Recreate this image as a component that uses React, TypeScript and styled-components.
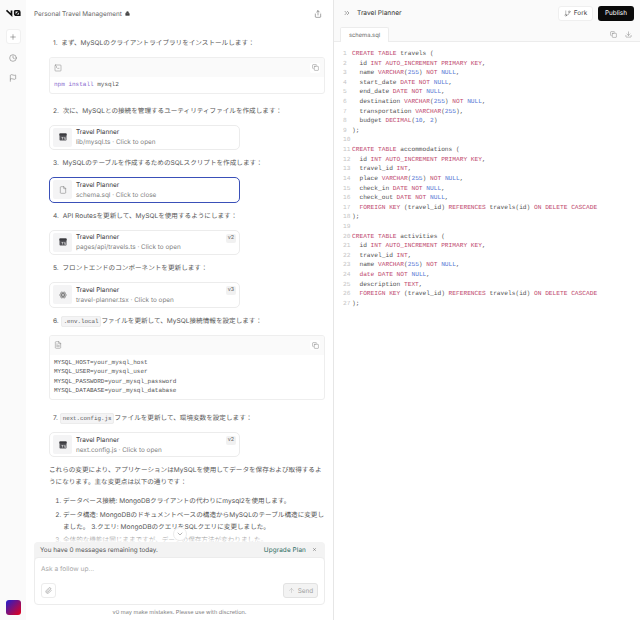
import React from "react";
import styled, { createGlobalStyle } from "styled-components";
import {
  Plus, Clock, Flag, Share, Lock, SquareTerminal, Copy, File, FileText, ChevronDown, X,
  Paperclip, ArrowUp, ChevronsRight, GitBranch, Download,
} from "lucide-react";

const sql = `CREATE TABLE travels (
  id INT AUTO_INCREMENT PRIMARY KEY,
  name VARCHAR(255) NOT NULL,
  start_date DATE NOT NULL,
  end_date DATE NOT NULL,
  destination VARCHAR(255) NOT NULL,
  transportation VARCHAR(255),
  budget DECIMAL(10, 2)
);

CREATE TABLE accommodations (
  id INT AUTO_INCREMENT PRIMARY KEY,
  travel_id INT,
  place VARCHAR(255) NOT NULL,
  check_in DATE NOT NULL,
  check_out DATE NOT NULL,
  FOREIGN KEY (travel_id) REFERENCES travels(id) ON DELETE CASCADE
);

CREATE TABLE activities (
  id INT AUTO_INCREMENT PRIMARY KEY,
  travel_id INT,
  name VARCHAR(255) NOT NULL,
  date DATE NOT NULL,
  description TEXT,
  FOREIGN KEY (travel_id) REFERENCES travels(id) ON DELETE CASCADE
);`.split("\n");

const tokenRe = /\b(CREATE|TABLE|INT|AUTO_INCREMENT|PRIMARY|KEY|VARCHAR|NOT|DATE|date|DECIMAL|FOREIGN|REFERENCES|ON|DELETE|CASCADE|TEXT|NULL|\d+)\b/g;

const highlight = (line: string) =>
  line.split(tokenRe).map((part, i) => {
    if (i % 2 === 0) return part;
    const blue = part === "NULL" || /^\d+$/.test(part);
    return <Token key={i} $blue={blue}>{part}</Token>;
  });

const TsBadge = () => (
  <svg width="8" height="8" viewBox="0 0 16 16">
    <rect x="1" y="1" width="14" height="14" rx="1.5" fill="#55555a" />
    <rect x="1" y="1" width="14" height="4" fill="#3a3a3e" />
    <path d="M5 9h4M7 9v4M13 9h-2v2h2v2h-2" stroke="#fff" strokeWidth="1" fill="none" />
  </svg>
);

const ReactMark = () => (
  <svg width="8" height="8" viewBox="0 0 16 16" fill="none" stroke="#555" strokeWidth="1">
    <ellipse cx="8" cy="8" rx="7" ry="2.8" />
    <ellipse cx="8" cy="8" rx="7" ry="2.8" transform="rotate(60 8 8)" />
    <ellipse cx="8" cy="8" rx="7" ry="2.8" transform="rotate(120 8 8)" />
    <circle cx="8" cy="8" r="1.2" fill="#555" stroke="none" />
  </svg>
);

const Logo = () => (
  <svg width="15" height="8" viewBox="0 0 30 16" fill="none" stroke="#111" strokeWidth="3.4">
    <path d="M1 2.5 L11 12 V3" />
    <path d="M17 3.5 H25 A2.5 2.5 0 0 1 27.5 6 V12.5 H20 A2.5 2.5 0 0 1 17.5 10 V3.5 Z" />
    <path d="M19 12 L27 4" strokeWidth="2.4" />
  </svg>
);

interface CardProps {
  name: string;
  icon: React.ReactNode;
  action?: string;
  version?: string;
  active?: boolean;
}

const Card = ({ name, icon, action = "open", version, active }: CardProps) => (
  <CardBox $active={active}>
    <CardIcon>{icon}</CardIcon>
    <CardText>
      <CardTitle>Travel Planner</CardTitle>
      <CardSub>{name} · Click to {action}</CardSub>
    </CardText>
    {version && <Version>{version}</Version>}
  </CardBox>
);

const App = () => (
  <Page>
    <GlobalStyle />
    <Sidebar>
      <LogoSlot><Logo /></LogoSlot>
      <NewButton><Plus size={8} strokeWidth={1.3} /></NewButton>
      <SideIcon><Clock size={8} strokeWidth={1.2} /></SideIcon>
      <SideIcon><Flag size={8} strokeWidth={1.2} /></SideIcon>
      <Avatar />
    </Sidebar>

    <Chat>
      <ChatHeader>
        <ChatTitle>Personal Travel Management</ChatTitle>
        <Lock size={5} fill="#444" color="#444" />
        <HeaderSpacer />
        <Share size={8} strokeWidth={1.2} color="#222" />
      </ChatHeader>

      <Messages>
        <Step $top={11}>1.&nbsp; まず、MySQLのクライアントライブラリをインストールします：</Step>
        <CodeBlock>
          <CodeHead>
            <SquareTerminal size={8} strokeWidth={1.1} color="#555" />
            <CopyButton><Copy size={7} strokeWidth={1.2} /></CopyButton>
          </CodeHead>
          <CodeBody><Purple>npm install</Purple> mysql2</CodeBody>
        </CodeBlock>

        <Step $top={12}>2.&nbsp; 次に、MySQLとの接続を管理するユーティリティファイルを作成します：</Step>
        <Card name="lib/mysql.ts" icon={<TsBadge />} />

        <Step>3.&nbsp; MySQLのテーブルを作成するためのSQLスクリプトを作成します：</Step>
        <Card name="schema.sql" icon={<File size={8} strokeWidth={1.2} />} action="close" active />

        <Step>4.&nbsp; API Routesを更新して、MySQLを使用するようにします：</Step>
        <Card name="pages/api/travels.ts" icon={<TsBadge />} version="v2" />

        <Step>5.&nbsp; フロントエンドのコンポーネントを更新します：</Step>
        <Card name="travel-planner.tsx" icon={<ReactMark />} version="v3" />

        <Step>6.&nbsp;<InlineCode>.env.local</InlineCode>ファイルを更新して、MySQL接続情報を設定します：</Step>
        <CodeBlock>
          <CodeHead>
            <FileText size={8} strokeWidth={1.1} color="#555" />
            <CopyButton><Copy size={7} strokeWidth={1.2} /></CopyButton>
          </CodeHead>
          <CodeBody>
            MYSQL_HOST=your_mysql_host<br />
            MYSQL_USER=your_mysql_user<br />
            MYSQL_PASSWORD=your_mysql_password<br />
            MYSQL_DATABASE=your_mysql_database
          </CodeBody>
        </CodeBlock>

        <Step $top={13}>7.&nbsp;<InlineCode>next.config.js</InlineCode>ファイルを更新して、環境変数を設定します：</Step>
        <Card name="next.config.js" icon={<TsBadge />} version="v2" />

        <Paragraph>これらの変更により、アプリケーションはMySQLを使用してデータを保存および取得するようになります。主な変更点は以下の通りです：</Paragraph>
        <List>
          <li>データベース接続: MongoDBクライアントの代わりにmysql2を使用します。</li>
          <li>データ構造: MongoDBのドキュメントベースの構造からMySQLのテーブル構造に変更しました。 3.クエリ: MongoDBのクエリをSQLクエリに変更しました。</li>
          <li>全体的な機能は同じままですが、データの保存方法が変わりました。</li>
        </List>
      </Messages>

      <Composer>
        <ScrollDown><ChevronDown size={8} strokeWidth={1.3} /></ScrollDown>
        <Banner>
          <span>You have 0 messages remaining today.</span>
          <Upgrade>Upgrade Plan</Upgrade>
          <X size={5} strokeWidth={1.6} color="#333" />
        </Banner>
        <InputBox>
          <Placeholder>Ask a follow up...</Placeholder>
          <InputRow>
            <AttachButton><Paperclip size={7} strokeWidth={1.2} /></AttachButton>
            <SendButton><ArrowUp size={7} strokeWidth={1.2} />Send</SendButton>
          </InputRow>
        </InputBox>
        <Disclaimer>v0 may make mistakes. Please use with discretion.</Disclaimer>
      </Composer>
    </Chat>

    <Preview>
      <PreviewHeader>
        <ChevronsRight size={8} strokeWidth={1.2} color="#222" />
        <PreviewTitle>Travel Planner</PreviewTitle>
        <HeaderSpacer />
        <ForkButton><GitBranch size={7} strokeWidth={1.2} />Fork</ForkButton>
        <PublishButton>Publish</PublishButton>
      </PreviewHeader>
      <TabBar>
        <Tab>schema.sql</Tab>
        <HeaderSpacer />
        <Copy size={7} strokeWidth={1.1} color="#444" />
        <Download size={7} strokeWidth={1.1} color="#444" />
      </TabBar>
      <Editor>
        {sql.map((line, i) => (
          <CodeLine key={i}>
            <LineNo>{i + 1}</LineNo>
            <span>{highlight(line)}</span>
          </CodeLine>
        ))}
      </Editor>
    </Preview>
  </Page>
);

const GlobalStyle = createGlobalStyle`
  html, body { margin: 0; padding: 0; background: #fff; }
  * { box-sizing: border-box; }
  body { text-rendering: geometricPrecision; }
`;

const sans = `Inter, "Noto Sans CJK JP", sans-serif`;
const mono = `"Liberation Mono", "DejaVu Sans Mono", monospace`;

const Page = styled.div`
  width: 640px;
  height: 620px;
  display: flex;
  overflow: hidden;
  background: #fafafa;
  font-family: ${sans};
  color: #333;
`;

const Sidebar = styled.aside`
  width: 26px;
  flex: none;
  display: flex;
  flex-direction: column;
  align-items: center;
  padding: 9px 0 5px;
  background: #fafafa;
`;

const LogoSlot = styled.div`
  height: 8px;
  margin-bottom: 12px;
  display: flex;
`;

const NewButton = styled.div`
  width: 15px;
  height: 15px;
  display: flex;
  align-items: center;
  justify-content: center;
  background: #fff;
  border: 1px solid #f0f0f0;
  border-radius: 3px;
  color: #444;
  margin-bottom: 6px;
`;

const SideIcon = styled.div`
  width: 15px;
  height: 15px;
  margin-bottom: 5px;
  display: flex;
  align-items: center;
  justify-content: center;
  color: #444;
`;

const Avatar = styled.div`
  width: 15px;
  height: 15px;
  margin-top: auto;
  border-radius: 3px;
  background: linear-gradient(135deg, #1f1fd0, #e80018);
`;

const Chat = styled.main`
  position: relative;
  width: 308px;
  flex: none;
  background: #fff;
  border-right: 1px solid #e6e6e6;
  display: flex;
  flex-direction: column;
  overflow: hidden;
`;

const ChatHeader = styled.header`
  height: 27px;
  flex: none;
  padding: 0 11px 0 8px;
  display: flex;
  align-items: center;
  gap: 3px;
`;

const ChatTitle = styled.div`
  font-size: 6.4px;
  color: #666;
`;

const HeaderSpacer = styled.div`
  flex: 1;
`;

const Messages = styled.div`
  flex: 1;
  overflow: hidden;
  padding: 0 8px 0 23px;
`;

const Step = styled.div<{ $top?: number }>`
  height: 10px;
  font-size: 6.6px;
  line-height: 10px;
  color: #555;
  padding-left: 4px;
  margin: ${(p) => p.$top ?? 8}px 0 9px;
  white-space: nowrap;
`;

const InlineCode = styled.code`
  font-family: ${mono};
  font-size: 5.8px;
  line-height: 1;
  color: #555;
  background: #f4f4f5;
  border: 1px solid #ececec;
  border-radius: 2px;
  padding: 1px 2px;
`;

const CodeBlock = styled.div`
  width: 276px;
  border: 1px solid #eeeeee;
  border-radius: 3px;
  overflow: hidden;
  background: #fff;
`;

const CodeHead = styled.div`
  height: 19px;
  padding: 0 4px;
  background: #fafafa;
  display: flex;
  align-items: center;
  justify-content: space-between;
`;

const CopyButton = styled.div`
  width: 10px;
  height: 10px;
  background: #fff;
  border-radius: 2px;
  display: flex;
  align-items: center;
  justify-content: center;
  color: #555;
`;

const CodeBody = styled.div`
  padding: 3px 4px;
  font-family: ${mono};
  font-size: 6px;
  line-height: 9.6px;
  color: #555;
`;

const Purple = styled.span`
  color: #8a6cd0;
`;

const CardBox = styled.div<{ $active?: boolean }>`
  position: relative;
  width: 191px;
  height: 25.5px;
  padding: 3px;
  display: flex;
  align-items: center;
  gap: 4px;
  background: #fff;
  border: 1px solid ${(p) => (p.$active ? "#3a50b8" : "#ececec")};
  border-radius: 5px;
`;

const CardIcon = styled.div`
  width: 19px;
  height: 19px;
  flex: none;
  background: #f4f4f5;
  border-radius: 2px;
  display: flex;
  align-items: center;
  justify-content: center;
  color: #555;
`;

const CardText = styled.div`
  display: flex;
  flex-direction: column;
  gap: 2px;
`;

const CardTitle = styled.div`
  font-size: 6.4px;
  line-height: 8px;
  color: #333;
`;

const CardSub = styled.div`
  font-size: 6.4px;
  line-height: 8px;
  color: #808080;
`;

const Version = styled.div`
  position: absolute;
  top: 3px;
  right: 3px;
  padding: 1px 2px;
  font-size: 5.4px;
  line-height: 7px;
  background: #f1f1f1;
  border-radius: 2px;
  color: #666;
`;

const Paragraph = styled.p`
  margin: 7px 0 0;
  width: 276px;
  font-size: 6.6px;
  line-height: 12px;
  color: #555;
`;

const List = styled.ol`
  margin: 7px 0 0;
  padding: 0 0 0 14px;
  width: 276px;
  font-size: 6.6px;
  line-height: 12px;
  color: #555;

  li { margin-bottom: 1.5px; padding-left: 0; }
`;

const ScrollDown = styled.div`
  position: absolute;
  left: 139px;
  top: -15px;
  width: 14px;
  height: 14px;
  border-radius: 50%;
  background: #fff;
  border: 1px solid #ececec;
  display: flex;
  align-items: center;
  justify-content: center;
  color: #555;
  z-index: 1;
`;

const Composer = styled.div`
  position: absolute;
  left: 8px;
  right: 8px;
  top: 542px;
  bottom: 0;
  background: #fff;

  &::before {
    content: "";
    position: absolute;
    left: -8px;
    right: -8px;
    top: -9px;
    height: 9px;
    background: linear-gradient(rgba(255, 255, 255, 0), rgba(255, 255, 255, 0.9));
  }
`;

const Banner = styled.div`
  height: 18px;
  padding: 0 8px 3px 6px;
  display: flex;
  align-items: center;
  gap: 6px;
  background: #f3f3f3;
  border-radius: 4px 4px 0 0;
  font-size: 6.4px;
  color: #555;

  span { flex: 1; }
`;

const Upgrade = styled.div`
  color: #2a6a60;
  letter-spacing: 0.1px;
`;

const InputBox = styled.div`
  height: 48px;
  margin-top: -3px;
  padding: 7px 6px 6px;
  display: flex;
  flex-direction: column;
  justify-content: space-between;
  background: #fff;
  border: 1px solid #ececec;
  border-radius: 4px;
`;

const Placeholder = styled.div`
  font-size: 6.6px;
  color: #a8a8a8;
`;

const InputRow = styled.div`
  display: flex;
  align-items: center;
  justify-content: space-between;
`;

const AttachButton = styled.div`
  width: 15px;
  height: 15px;
  display: flex;
  align-items: center;
  justify-content: center;
  border: 1px solid #ececec;
  border-radius: 3px;
  color: #555;
`;

const SendButton = styled.div`
  width: 35px;
  height: 15px;
  display: flex;
  align-items: center;
  justify-content: center;
  gap: 3px;
  background: #f3f3f3;
  border: 1px solid #e2e2e2;
  border-radius: 3px;
  font-size: 6.4px;
  color: #a0a0a0;
`;

const Disclaimer = styled.div`
  margin-top: 3px;
  text-align: center;
  font-size: 5.6px;
  line-height: 10px;
  color: #808080;
`;

const Preview = styled.section`
  flex: 1;
  min-width: 0;
  display: flex;
  flex-direction: column;
  background: #fff;
`;

const PreviewHeader = styled.header`
  height: 27px;
  flex: none;
  padding: 0 6px 1px 9px;
  display: flex;
  align-items: center;
  gap: 5px;
  background: #fafafa;
`;

const PreviewTitle = styled.div`
  font-size: 6.6px;
  margin-left: 1px;
  color: #333;
`;

const ForkButton = styled.div`
  width: 35px;
  height: 15px;
  display: flex;
  align-items: center;
  justify-content: center;
  gap: 3px;
  background: #fff;
  border: 1px solid #efefef;
  border-radius: 3px;
  font-size: 6.4px;
  color: #444;
`;

const PublishButton = styled.div`
  width: 36px;
  height: 15px;
  display: flex;
  align-items: center;
  justify-content: center;
  background: #0a0a0a;
  border-radius: 3px;
  font-size: 6.4px;
  color: #fff;
`;

const TabBar = styled.div`
  height: 15px;
  flex: none;
  padding: 0 8px 0 6px;
  display: flex;
  align-items: flex-end;
  gap: 8px;
  background: #fafafa;
  border-bottom: 1px solid #ececec;

  svg { margin-bottom: 3px; }
`;

const Tab = styled.div`
  width: 49px;
  height: 15px;
  margin-bottom: -1px;
  display: flex;
  align-items: center;
  justify-content: center;
  background: #fff;
  border: 1px solid #ececec;
  border-bottom: none;
  border-radius: 2px 2px 0 0;
  font-size: 5.8px;
  color: #666;
`;

const Editor = styled.div`
  flex: 1;
  padding: 7px 0 0 9px;
  font-family: ${mono};
  font-size: 6.2px;
  line-height: 9.62px;
  color: #555;
`;

const CodeLine = styled.div`
  display: flex;
  white-space: pre;
  height: 9.62px;
`;

const LineNo = styled.span`
  width: 9px;
  flex: none;
  color: #c4c4c4;
`;

const Token = styled.span<{ $blue: boolean }>`
  color: ${(p) => (p.$blue ? "#5577d4" : "#c04a6e")};
`;

export default App;
